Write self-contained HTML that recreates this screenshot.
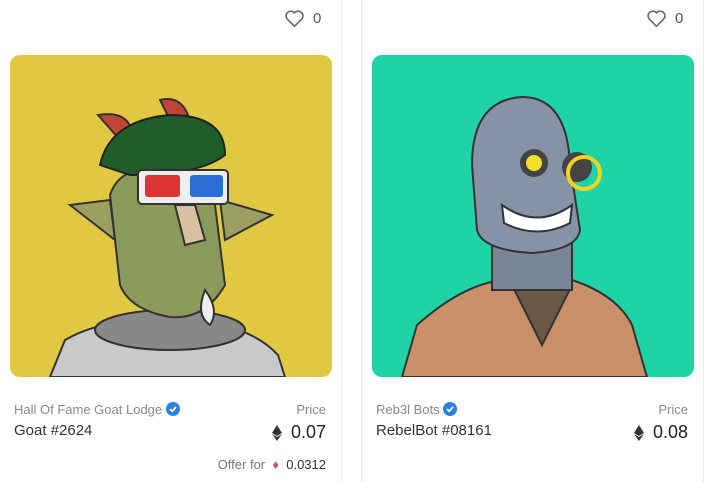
<!DOCTYPE html>
<html style="height:482px;overflow:hidden"><head><style>
body{margin:0;width:707px;height:482px;background:#fff;font-family:"Liberation Sans",sans-serif;overflow:hidden;position:relative}
.card{position:absolute;top:-2px;height:484px;border:1px solid #ececec;border-top:none;border-bottom:none;box-sizing:border-box}
.like{position:absolute;top:9px;font-size:15px;color:#555;display:flex;align-items:center;gap:8px}
.img{position:absolute;top:55px;width:322px;height:322px;border-radius:10px;overflow:hidden}
.col{position:absolute;font-size:13px;color:#888}
.name{position:absolute;font-size:15px;color:#333}
.price{position:absolute;font-size:18px;color:#222;display:flex;align-items:center;gap:9px}
</style></head><body>
<div class="card" style="left:-1px;width:343px"></div>
<div class="card" style="left:361px;width:343px"></div>

<div class="like" style="left:284px"><svg width="21" height="19" viewBox="0 0 24 22"><path d="M12 20 L3.5 11.5 A5 5 0 0 1 12 4.5 A5 5 0 0 1 20.5 11.5 Z" fill="none" stroke="#666" stroke-width="1.8" stroke-linejoin="round"/></svg>0</div>
<div class="like" style="left:646px"><svg width="21" height="19" viewBox="0 0 24 22"><path d="M12 20 L3.5 11.5 A5 5 0 0 1 12 4.5 A5 5 0 0 1 20.5 11.5 Z" fill="none" stroke="#666" stroke-width="1.8" stroke-linejoin="round"/></svg>0</div>

<div class="img" style="left:10px;background:#e1c843">
<svg width="322" height="322">
<path d="M40 322 L55 285 Q90 265 130 268 L200 268 Q245 275 268 300 L275 322Z" fill="#c9c9c9" stroke="#333" stroke-width="2"/>
<ellipse cx="160" cy="275" rx="75" ry="20" fill="#888" stroke="#333" stroke-width="2"/>
<path d="M100 140 Q110 110 150 115 Q200 115 205 150 L215 230 Q195 265 160 262 Q120 255 110 230 Z" fill="#8a9a5a" stroke="#333" stroke-width="2"/>
<path d="M60 150 L100 145 L105 185Z" fill="#9aa060" stroke="#333" stroke-width="2"/>
<path d="M210 145 L262 160 L215 185Z" fill="#9aa060" stroke="#333" stroke-width="2"/>
<path d="M88 60 Q120 55 122 80 L110 85Z M150 45 Q170 40 178 60 L160 65Z" fill="#c0443a" stroke="#333" stroke-width="2"/>
<path d="M90 110 Q100 65 160 60 Q215 60 215 100 Q190 120 120 120Z" fill="#1f5e2a" stroke="#222" stroke-width="2"/>
<rect x="128" y="115" width="90" height="34" rx="4" fill="#eee" stroke="#333" stroke-width="2"/>
<rect x="135" y="120" width="35" height="22" rx="3" fill="#d33"/><rect x="180" y="120" width="33" height="22" rx="3" fill="#2a6fd8"/>
<path d="M165 150 L185 150 L195 185 L175 190Z" fill="#d9c0a0" stroke="#333" stroke-width="2"/>
<path d="M195 235 Q210 255 200 270 Q185 260 195 235Z" fill="#eee" stroke="#333" stroke-width="2"/>
</svg></div>

<div class="img" style="left:372px;background:#1fd3a6">
<svg width="322" height="322">
<path d="M30 322 L45 270 Q90 230 130 225 L200 225 Q245 240 260 270 L275 322Z" fill="#c8916a" stroke="#333" stroke-width="2"/>
<path d="M140 230 L170 290 L200 230Z" fill="#6b5a45" stroke="#333" stroke-width="2"/>
<path d="M120 180 L120 235 L200 235 L200 180Z" fill="#7a8698" stroke="#333" stroke-width="2"/>
<path d="M100 110 Q100 45 150 42 Q195 42 198 110 L208 175 Q205 195 160 198 Q110 195 105 175Z" fill="#8692a6" stroke="#333" stroke-width="2"/>
<path d="M130 150 Q165 175 200 150 L198 168 Q165 185 132 168Z" fill="#fff" stroke="#333" stroke-width="2"/>
<circle cx="162" cy="108" r="14" fill="#444"/><circle cx="162" cy="108" r="8" fill="#f1e12a"/>
<circle cx="205" cy="112" r="15" fill="#444"/><circle cx="212" cy="118" r="16" fill="none" stroke="#f2d21c" stroke-width="4"/>
</svg></div>

<div class="col" style="left:14px;top:402px">Hall Of Fame Goat Lodge <svg width="14" height="14" viewBox="0 0 14 14" style="vertical-align:-2px"><circle cx="7" cy="7" r="7" fill="#2a81e0"/><path d="M4 7.2 L6.2 9.2 L10 5" stroke="#fff" stroke-width="1.8" fill="none"/></svg></div>
<div class="name" style="left:14px;top:422px">Goat #2624</div>
<div class="col" style="right:381px;top:402px">Price</div>
<div class="price" style="right:381px;top:422px"><svg width="10" height="16" viewBox="0 0 10 16"><path d="M5 0 L10 8 L5 11 L0 8Z M5 12 L10 9 L5 16 L0 9Z" fill="#333"/></svg>0.07</div>
<div class="col" style="right:381px;top:457px;color:#777">Offer for &nbsp;<span style="color:#d14a7a">♦</span>&nbsp; <span style="color:#333">0.0312</span></div>

<div class="col" style="left:376px;top:402px">Reb3l Bots <svg width="14" height="14" viewBox="0 0 14 14" style="vertical-align:-2px"><circle cx="7" cy="7" r="7" fill="#2a81e0"/><path d="M4 7.2 L6.2 9.2 L10 5" stroke="#fff" stroke-width="1.8" fill="none"/></svg></div>
<div class="name" style="left:376px;top:422px">RebelBot #08161</div>
<div class="col" style="right:19px;top:402px">Price</div>
<div class="price" style="right:19px;top:422px"><svg width="10" height="16" viewBox="0 0 10 16"><path d="M5 0 L10 8 L5 11 L0 8Z M5 12 L10 9 L5 16 L0 9Z" fill="#333"/></svg>0.08</div>
</body></html>
